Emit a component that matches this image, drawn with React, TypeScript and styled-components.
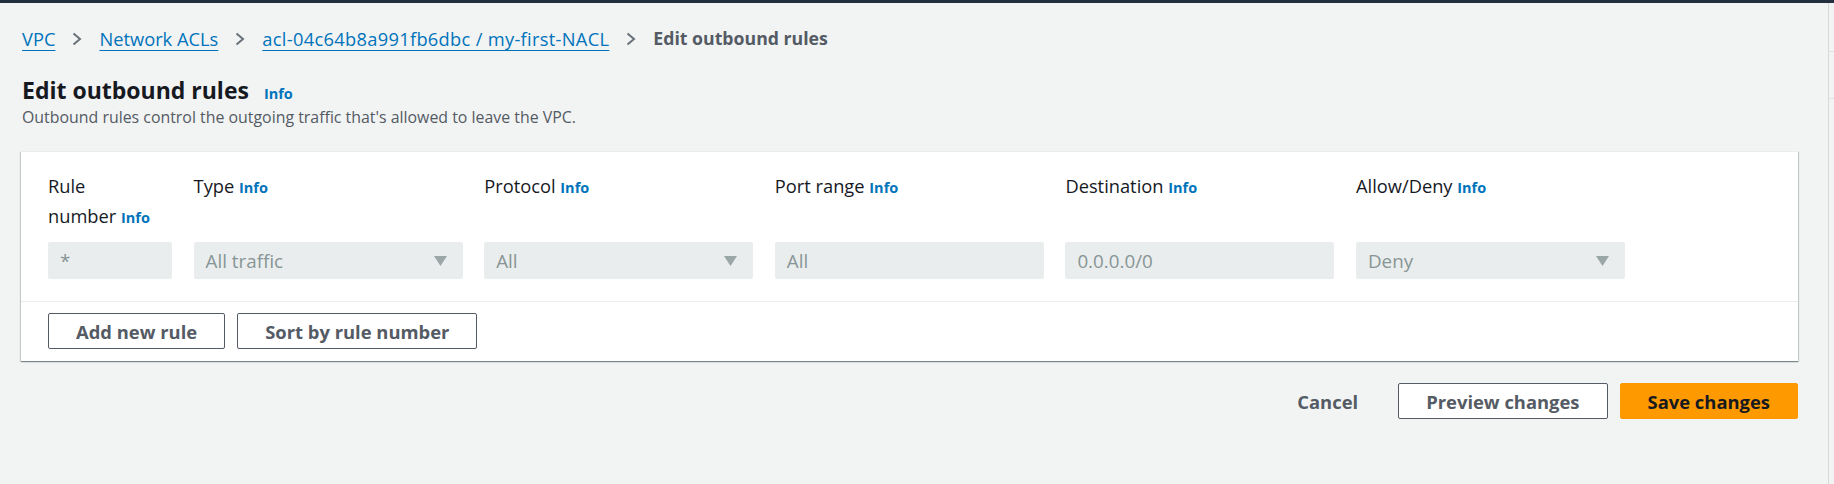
import styled, { createGlobalStyle } from "styled-components";

type ButtonVariant = "normal" | "primary" | "link";

interface IButtonProps {
  $variant?: ButtonVariant;
}

interface IColumn {
  label: string;
  value: string;
  select: boolean;
  wrapAfter?: string;
}

const GlobalStyle = createGlobalStyle`
  * {
    box-sizing: border-box;
  }
  body {
    margin: 0;
    background-color: #f2f3f3;
    font-family: "Open Sans", "Noto Sans", Arial, sans-serif;
    color: #16191f;
  }
`;

const TopBar = styled.div`
  height: 3px;
  background-color: #232f3e;
`;

const Layout = styled.div`
  display: flex;
  min-height: calc(100vh - 3px);
`;

const Main = styled.main`
  flex: 1;
  display: flex;
  flex-direction: column;
  padding: 23px 30px 0 21px;
`;

const Aside = styled.aside`
  width: 6px;
  flex-shrink: 0;
  border-left: 1px solid #d5dbdb;
  display: flex;
  flex-direction: column;
`;

const AsideSlot = styled.div<{ $height: number }>`
  height: ${(props) => props.$height}px;
  border-bottom: 1px solid #dfe3e3;
`;

const Breadcrumbs = styled.nav`
  display: flex;
  align-items: center;
  font-size: 18.3px;
  line-height: 25px;
  padding-left: 1px;
`;

const Crumb = styled.a<{ $spacing?: number }>`
  color: #0073bb;
  text-decoration: underline;
  text-decoration-thickness: 1px;
  text-underline-offset: 4px;
  letter-spacing: ${(props) => props.$spacing ?? 0}px;
`;

const CurrentCrumb = styled.span`
  color: #545b64;
  font-weight: 700;
  font-size: 17.7px;
`;

const ChevronIcon = styled.svg`
  width: 10px;
  height: 14px;
  margin: 0 17px;
  flex-shrink: 0;
`;

const Header = styled.header`
  margin-top: 24px;
  padding-left: 1px;
`;

const TitleRow = styled.div`
  display: flex;
  align-items: baseline;
`;

const Title = styled.h1`
  margin: 0;
  font-size: 23px;
  line-height: 30px;
  font-weight: 700;
  color: #16191f;
`;

const InfoLink = styled.a<{ $gap: number }>`
  margin-left: ${(props) => props.$gap}px;
  font-size: 14.5px;
  font-weight: 700;
  color: #0073bb;
  text-decoration: none;
`;

const Description = styled.p`
  margin: 1px 0 0;
  font-size: 15.9px;
  line-height: 22px;
  color: #545b64;
`;

const Card = styled.section`
  margin-top: 23px;
  background-color: #ffffff;
  border-top: 1px solid #eaeded;
  box-shadow: 0 1px 1px 0 rgba(0, 28, 36, 0.3), 1px 1px 1px 0 rgba(0, 28, 36, 0.15),
    -1px 1px 1px 0 rgba(0, 28, 36, 0.15);
`;

const RulesGrid = styled.div`
  display: grid;
  grid-template-columns: 124px repeat(5, 269px);
  column-gap: 21.6px;
  row-gap: 9px;
  padding: 19px 27px 22px;
  border-bottom: 1px solid #eaeded;
`;

const ColumnLabel = styled.div`
  font-size: 18.3px;
  line-height: 30px;
  color: #16191f;
`;

const Field = styled.div`
  height: 37px;
  display: flex;
  align-items: center;
  justify-content: space-between;
  padding: 0 16px 0 12px;
  background-color: #eaeded;
  border-radius: 2px;
  font-size: 18.8px;
  color: #879596;
`;

const CaretIcon = styled.svg`
  width: 13px;
  height: 10px;
  flex-shrink: 0;
`;

const CardFooter = styled.div`
  display: flex;
  gap: 12px;
  padding: 11px 27px 12px;
`;

const Button = styled.button<IButtonProps>`
  height: 36px;
  padding: 0 27px;
  border-radius: 2px;
  font-family: inherit;
  font-size: 18.4px;
  font-weight: 700;
  cursor: pointer;
  border: 1px solid
    ${(props) =>
      props.$variant === "primary" ? "#ff9900" : props.$variant === "link" ? "transparent" : "#545b64"};
  background-color: ${(props) =>
    props.$variant === "primary" ? "#ff9900" : props.$variant === "link" ? "transparent" : "#ffffff"};
  color: ${(props) => (props.$variant === "primary" ? "#16191f" : "#545b64")};
`;

const Actions = styled.div`
  display: flex;
  justify-content: flex-end;
  gap: 12px;
  margin-top: 22px;
`;

const columns: IColumn[] = [
  { label: "Rule", wrapAfter: "number", value: "*", select: false },
  { label: "Type", value: "All traffic", select: true },
  { label: "Protocol", value: "All", select: true },
  { label: "Port range", value: "All", select: false },
  { label: "Destination", value: "0.0.0.0/0", select: false },
  { label: "Allow/Deny", value: "Deny", select: true },
];

const Chevron = () => (
  <ChevronIcon viewBox="0 0 10 14">
    <polyline points="1.5,1.5 8,7 1.5,12.5" fill="none" stroke="#687078" strokeWidth="2" />
  </ChevronIcon>
);

const Caret = () => (
  <CaretIcon viewBox="0 0 13 10">
    <polygon points="0,0 13,0 6.5,10" fill="#9ba7a7" />
  </CaretIcon>
);

const App = () => {
  return (
    <>
      <GlobalStyle />
      <TopBar />
      <Layout>
        <Main>
          <Breadcrumbs>
            <Crumb href="#">VPC</Crumb>
            <Chevron />
            <Crumb href="#">Network ACLs</Crumb>
            <Chevron />
            <Crumb href="#" $spacing={0.3}>acl-04c64b8a991fb6dbc / my-first-NACL</Crumb>
            <Chevron />
            <CurrentCrumb>Edit outbound rules</CurrentCrumb>
          </Breadcrumbs>

          <Header>
            <TitleRow>
              <Title>Edit outbound rules</Title>
              <InfoLink href="#" $gap={15}>Info</InfoLink>
            </TitleRow>
            <Description>Outbound rules control the outgoing traffic that's allowed to leave the VPC.</Description>
          </Header>

          <Card>
            <RulesGrid>
              {columns.map((col) => (
                <ColumnLabel key={col.label}>
                  {col.label}
                  {col.wrapAfter && <br />}
                  {col.wrapAfter ? col.wrapAfter : ""} <InfoLink href="#" $gap={0}>Info</InfoLink>
                </ColumnLabel>
              ))}
              {columns.map((col) => (
                <Field key={col.label + "-field"}>
                  <span>{col.value}</span>
                  {col.select && <Caret />}
                </Field>
              ))}
            </RulesGrid>
            <CardFooter>
              <Button>Add new rule</Button>
              <Button>Sort by rule number</Button>
            </CardFooter>
          </Card>

          <Actions>
            <Button $variant="link">Cancel</Button>
            <Button>Preview changes</Button>
            <Button $variant="primary">Save changes</Button>
          </Actions>
        </Main>
        <Aside>
          <AsideSlot $height={49} />
          <AsideSlot $height={47} />
        </Aside>
      </Layout>
    </>
  );
};

export default App;
